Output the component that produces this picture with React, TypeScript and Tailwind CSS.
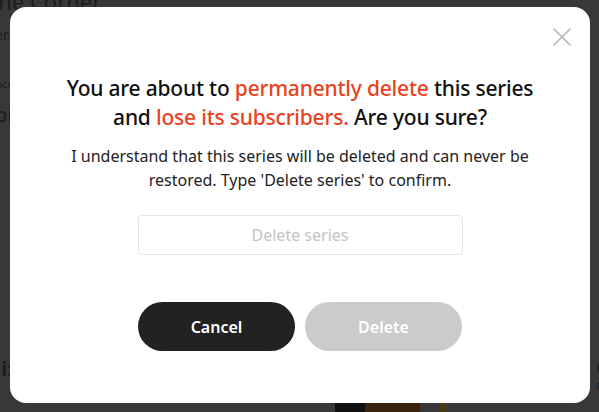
import React from "react";

export default function App() {
  const font = { fontFamily: '"Noto Sans", "Open Sans", sans-serif' };
  return (
    <div className="relative w-[599px] h-[412px] overflow-hidden bg-[#383838]" style={font}>
      {/* dimmed page behind */}
      <div className="flex flex-col text-[#1c1c1c] -ml-[14px]">
        <div className="text-[22px] leading-[22px] -mt-[10px]">The Corner</div>
        <div className="mt-[14px] text-[15px] leading-[16px]">Series</div>
        <div className="mt-[36px] text-[11px] leading-[12px]">Discover</div>
        <div className="mt-[14px] text-[20px] leading-[22px] -ml-[2px]">Episodes</div>
        <div className="mt-[232px] text-[20px] leading-[22px] font-bold">Hi: All</div>
      </div>
      <div className="absolute right-[-10px] top-[354px] flex flex-col items-start text-[#1c1c1c]">
        <div className="text-[22px] leading-[22px] font-semibold">e</div>
        <div className="mt-[2px] text-[14px] leading-[14px]">o</div>
      </div>
      <div className="absolute left-[335px] top-[402px] flex h-[10px]">
        <div className="w-[30px] bg-[#111]" />
        <div className="w-[55px] bg-[#3a2410]" />
        <div className="w-[20px]" />
        <div className="w-[6px] bg-[#4a3a10]" />
      </div>

      {/* modal */}
      <div className="absolute left-[10px] top-[7px] w-[580px] h-[396px] bg-white rounded-[16px] flex flex-col items-center">
        <button className="absolute right-[18px] top-[20px] w-[20px] h-[20px] flex items-center justify-center">
          <svg width="20" height="20" viewBox="0 0 20 20" fill="none" stroke="#b5b5b5" strokeWidth="1.6" strokeLinecap="round">
            <path d="M2 2 L18 18 M18 2 L2 18" />
          </svg>
        </button>
        <h2 className="mt-[67px] text-center text-[21px] leading-[29px] font-medium text-[#111] tracking-[-0.2px] whitespace-nowrap">
          You are about to <span className="text-[#e8431f]">permanently delete</span> this series
          <br />
          and <span className="text-[#e8431f]">lose its subscribers.</span> Are you sure?
        </h2>
        <p className="mt-[12px] text-center text-[16px] leading-[24px] text-[#222] whitespace-nowrap">
          I understand that this series will be deleted and can never be
          <br />
          restored. Type 'Delete series' to confirm.
        </p>
        <input
          className="mt-[23px] w-[325px] h-[40px] rounded-[4px] border border-[#e6e6e6] text-center text-[16px] text-[#333] placeholder:text-[#c4c4c4] outline-none"
          placeholder="Delete series"
        />
        <div className="mt-[47px] flex gap-[10px]">
          <button className="w-[157px] h-[49px] rounded-full bg-[#222222] text-white text-[16px] font-semibold">
            Cancel
          </button>
          <button className="w-[157px] h-[49px] rounded-full bg-[#cbcbcb] text-white text-[16px] font-semibold">
            Delete
          </button>
        </div>
      </div>
    </div>
  );
}
